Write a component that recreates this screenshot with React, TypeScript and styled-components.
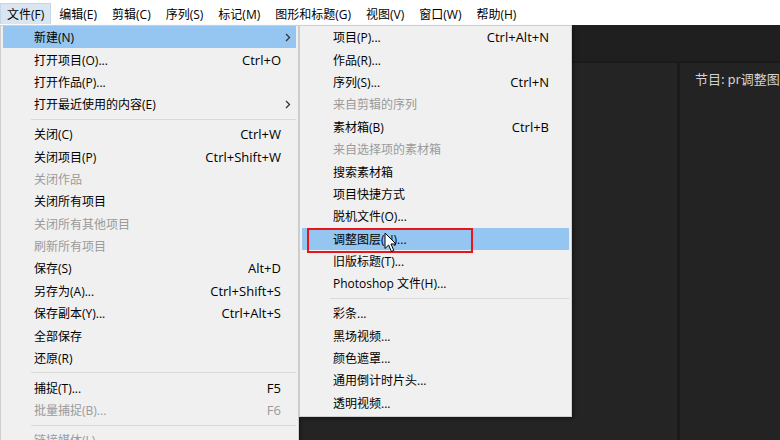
import styled, { createGlobalStyle } from "styled-components";

const GlobalStyle = createGlobalStyle`
  html, body {
    margin: 0;
    padding: 0;
    background: #232323;
  }
  * {
    box-sizing: border-box;
  }
`;

interface Entry {
  label?: string;
  shortcut?: string;
  disabled?: boolean;
  arrow?: boolean;
  active?: boolean;
  marked?: boolean;
  sep?: boolean;
}

const fileMenu: Entry[] = [
  { label: "新建(N)", arrow: true, active: true },
  { label: "打开项目(O)...", shortcut: "Ctrl+O" },
  { label: "打开作品(P)..." },
  { label: "打开最近使用的内容(E)", arrow: true },
  { sep: true },
  { label: "关闭(C)", shortcut: "Ctrl+W" },
  { label: "关闭项目(P)", shortcut: "Ctrl+Shift+W" },
  { label: "关闭作品", disabled: true },
  { label: "关闭所有项目" },
  { label: "关闭所有其他项目", disabled: true },
  { label: "刷新所有项目", disabled: true },
  { label: "保存(S)", shortcut: "Alt+D" },
  { label: "另存为(A)...", shortcut: "Ctrl+Shift+S" },
  { label: "保存副本(Y)...", shortcut: "Ctrl+Alt+S" },
  { label: "全部保存" },
  { label: "还原(R)" },
  { sep: true },
  { label: "捕捉(T)...", shortcut: "F5" },
  { label: "批量捕捉(B)...", shortcut: "F6", disabled: true },
  { sep: true },
  { label: "链接媒体(L)...", disabled: true },
  { label: "设为脱机(O)...", disabled: true },
];

const newMenu: Entry[] = [
  { label: "项目(P)...", shortcut: "Ctrl+Alt+N" },
  { label: "作品(R)..." },
  { label: "序列(S)...", shortcut: "Ctrl+N" },
  { label: "来自剪辑的序列", disabled: true },
  { label: "素材箱(B)", shortcut: "Ctrl+B" },
  { label: "来自选择项的素材箱", disabled: true },
  { label: "搜索素材箱" },
  { label: "项目快捷方式" },
  { label: "脱机文件(O)..." },
  { label: "调整图层(N)...", active: true, marked: true },
  { label: "旧版标题(T)..." },
  { label: "Photoshop 文件(H)..." },
  { sep: true },
  { label: "彩条..." },
  { label: "黑场视频..." },
  { label: "颜色遮罩..." },
  { label: "通用倒计时片头..." },
  { label: "透明视频..." },
];

const menuBar = [
  "文件(F)",
  "编辑(E)",
  "剪辑(C)",
  "序列(S)",
  "标记(M)",
  "图形和标题(G)",
  "视图(V)",
  "窗口(W)",
  "帮助(H)",
];

const Screen = styled.div`
  position: relative;
  width: 780px;
  height: 440px;
  overflow: hidden;
  display: flex;
  flex-direction: column;
  font-family: "Open Sans", "Noto Sans CJK SC", sans-serif;
  font-size: 12px;
  color: #000;
`;

const MenuBar = styled.div`
  height: 25px;
  flex: none;
  background: #ffffff;
  display: flex;
  align-items: stretch;
  padding-top: 3px;
  padding-bottom: 1px;
`;

const MenuBarItem = styled.div<{ $open?: boolean }>`
  display: flex;
  align-items: center;
  padding: 0 6px 1px 6px;
  margin-right: 1px;
  background: ${(p) => (p.$open ? "#d9e6f2" : "transparent")};
  border: 1px solid ${(p) => (p.$open ? "#c4d6e8" : "transparent")};
  border-bottom: none;
`;

const Workspace = styled.div`
  flex: 1;
  display: flex;
  flex-direction: column;
  background: #232323;
`;

const PanelHeader = styled.div`
  height: 38px;
  flex: none;
  background: #1f1f1f;
  border-bottom: 2px solid #1a1a1a;
`;

const PanelRow = styled.div`
  flex: 1;
  display: flex;
`;

const SourcePanel = styled.div`
  width: 677px;
  flex: none;
  background: #242424;
`;

const Divider = styled.div`
  width: 3px;
  flex: none;
  background: #1a1a1a;
`;

const ProgramPanel = styled.div`
  flex: 1;
  background: #232323;
  padding: 6px 0 0 15px;
  white-space: nowrap;
  overflow: hidden;
`;

const PanelTitle = styled.span`
  color: #d2d2d2;
  font-size: 13px;
  font-family: "Noto Sans CJK SC", sans-serif;
`;

const DropMenu = styled.div<{ $left: number; $width: number; $padRight: number }>`
  position: absolute;
  top: 25px;
  left: ${(p) => p.$left}px;
  width: ${(p) => p.$width}px;
  background: #f0f0f0;
  border: 1px solid #cfcfcf;
  box-shadow: 2px 2px 3px rgba(0, 0, 0, 0.35);
  padding: 0 2px 2px 2px;
  --pad-right: ${(p) => p.$padRight}px;
`;

const Row = styled.div<{ $active?: boolean; $disabled?: boolean }>`
  position: relative;
  height: 22.4px;
  display: flex;
  align-items: center;
  padding-left: 31px;
  padding-right: var(--pad-right);
  background: ${(p) => (p.$active ? "#94c6f1" : "transparent")};
  color: ${(p) => (p.$disabled ? "#9a9a9a" : "#000000")};
  white-space: nowrap;
`;

const Label = styled.span`
  flex: 1;
`;

const Shortcut = styled.span`
  text-align: right;
  font-size: 13px;
`;

const ArrowMark = styled.svg`
  position: absolute;
  right: 5px;
  top: 7px;
`;

const Separator = styled.div`
  height: 7.4px;
  display: flex;
  align-items: center;
  padding-left: 28px;
  &::after {
    content: "";
    flex: 1;
    height: 1px;
    background: #d9d9d9;
  }
`;

const RedMark = styled.span`
  position: absolute;
  left: 5px;
  top: 0;
  width: 166px;
  height: 25px;
  border: 2px solid #e8141c;
`;

const Cursor = styled.svg`
  position: absolute;
  left: 384px;
  top: 232px;
`;

const Chevron = () => (
  <ArrowMark width="6" height="9" viewBox="0 0 6 9">
    <path d="M1 1 L4.5 4.5 L1 8" fill="none" stroke="#333" strokeWidth="1.3" />
  </ArrowMark>
);

const MenuList = ({ entries }: { entries: Entry[] }) => (
  <>
    {entries.map((e, i) =>
      e.sep ? (
        <Separator key={i} />
      ) : (
        <Row key={i} $active={e.active} $disabled={e.disabled}>
          {e.marked && <RedMark />}
          <Label>{e.label}</Label>
          {e.shortcut && <Shortcut>{e.shortcut}</Shortcut>}
          {e.arrow && <Chevron />}
        </Row>
      )
    )}
  </>
);

export default function App() {
  return (
    <Screen>
      <GlobalStyle />
      <MenuBar>
        {menuBar.map((m, i) => (
          <MenuBarItem key={m} $open={i === 0}>
            {m}
          </MenuBarItem>
        ))}
      </MenuBar>
      <Workspace>
        <PanelHeader />
        <PanelRow>
          <SourcePanel />
          <Divider />
          <ProgramPanel>
            <PanelTitle>节目: pr调整图层</PanelTitle>
          </ProgramPanel>
        </PanelRow>
      </Workspace>
      <DropMenu $left={0} $width={299} $padRight={15}>
        <MenuList entries={fileMenu} />
      </DropMenu>
      <DropMenu $left={299} $width={273} $padRight={20}>
        <MenuList entries={newMenu} />
      </DropMenu>
      <Cursor width="14" height="21" viewBox="0 0 14 21">
        <path
          d="M1 1 L1 16.5 L4.6 13 L7.4 19.5 L9.8 18.5 L7 12 L12 12 Z"
          fill="#ffffff"
          stroke="#000000"
          strokeWidth="1"
          strokeLinejoin="round"
        />
      </Cursor>
    </Screen>
  );
}
